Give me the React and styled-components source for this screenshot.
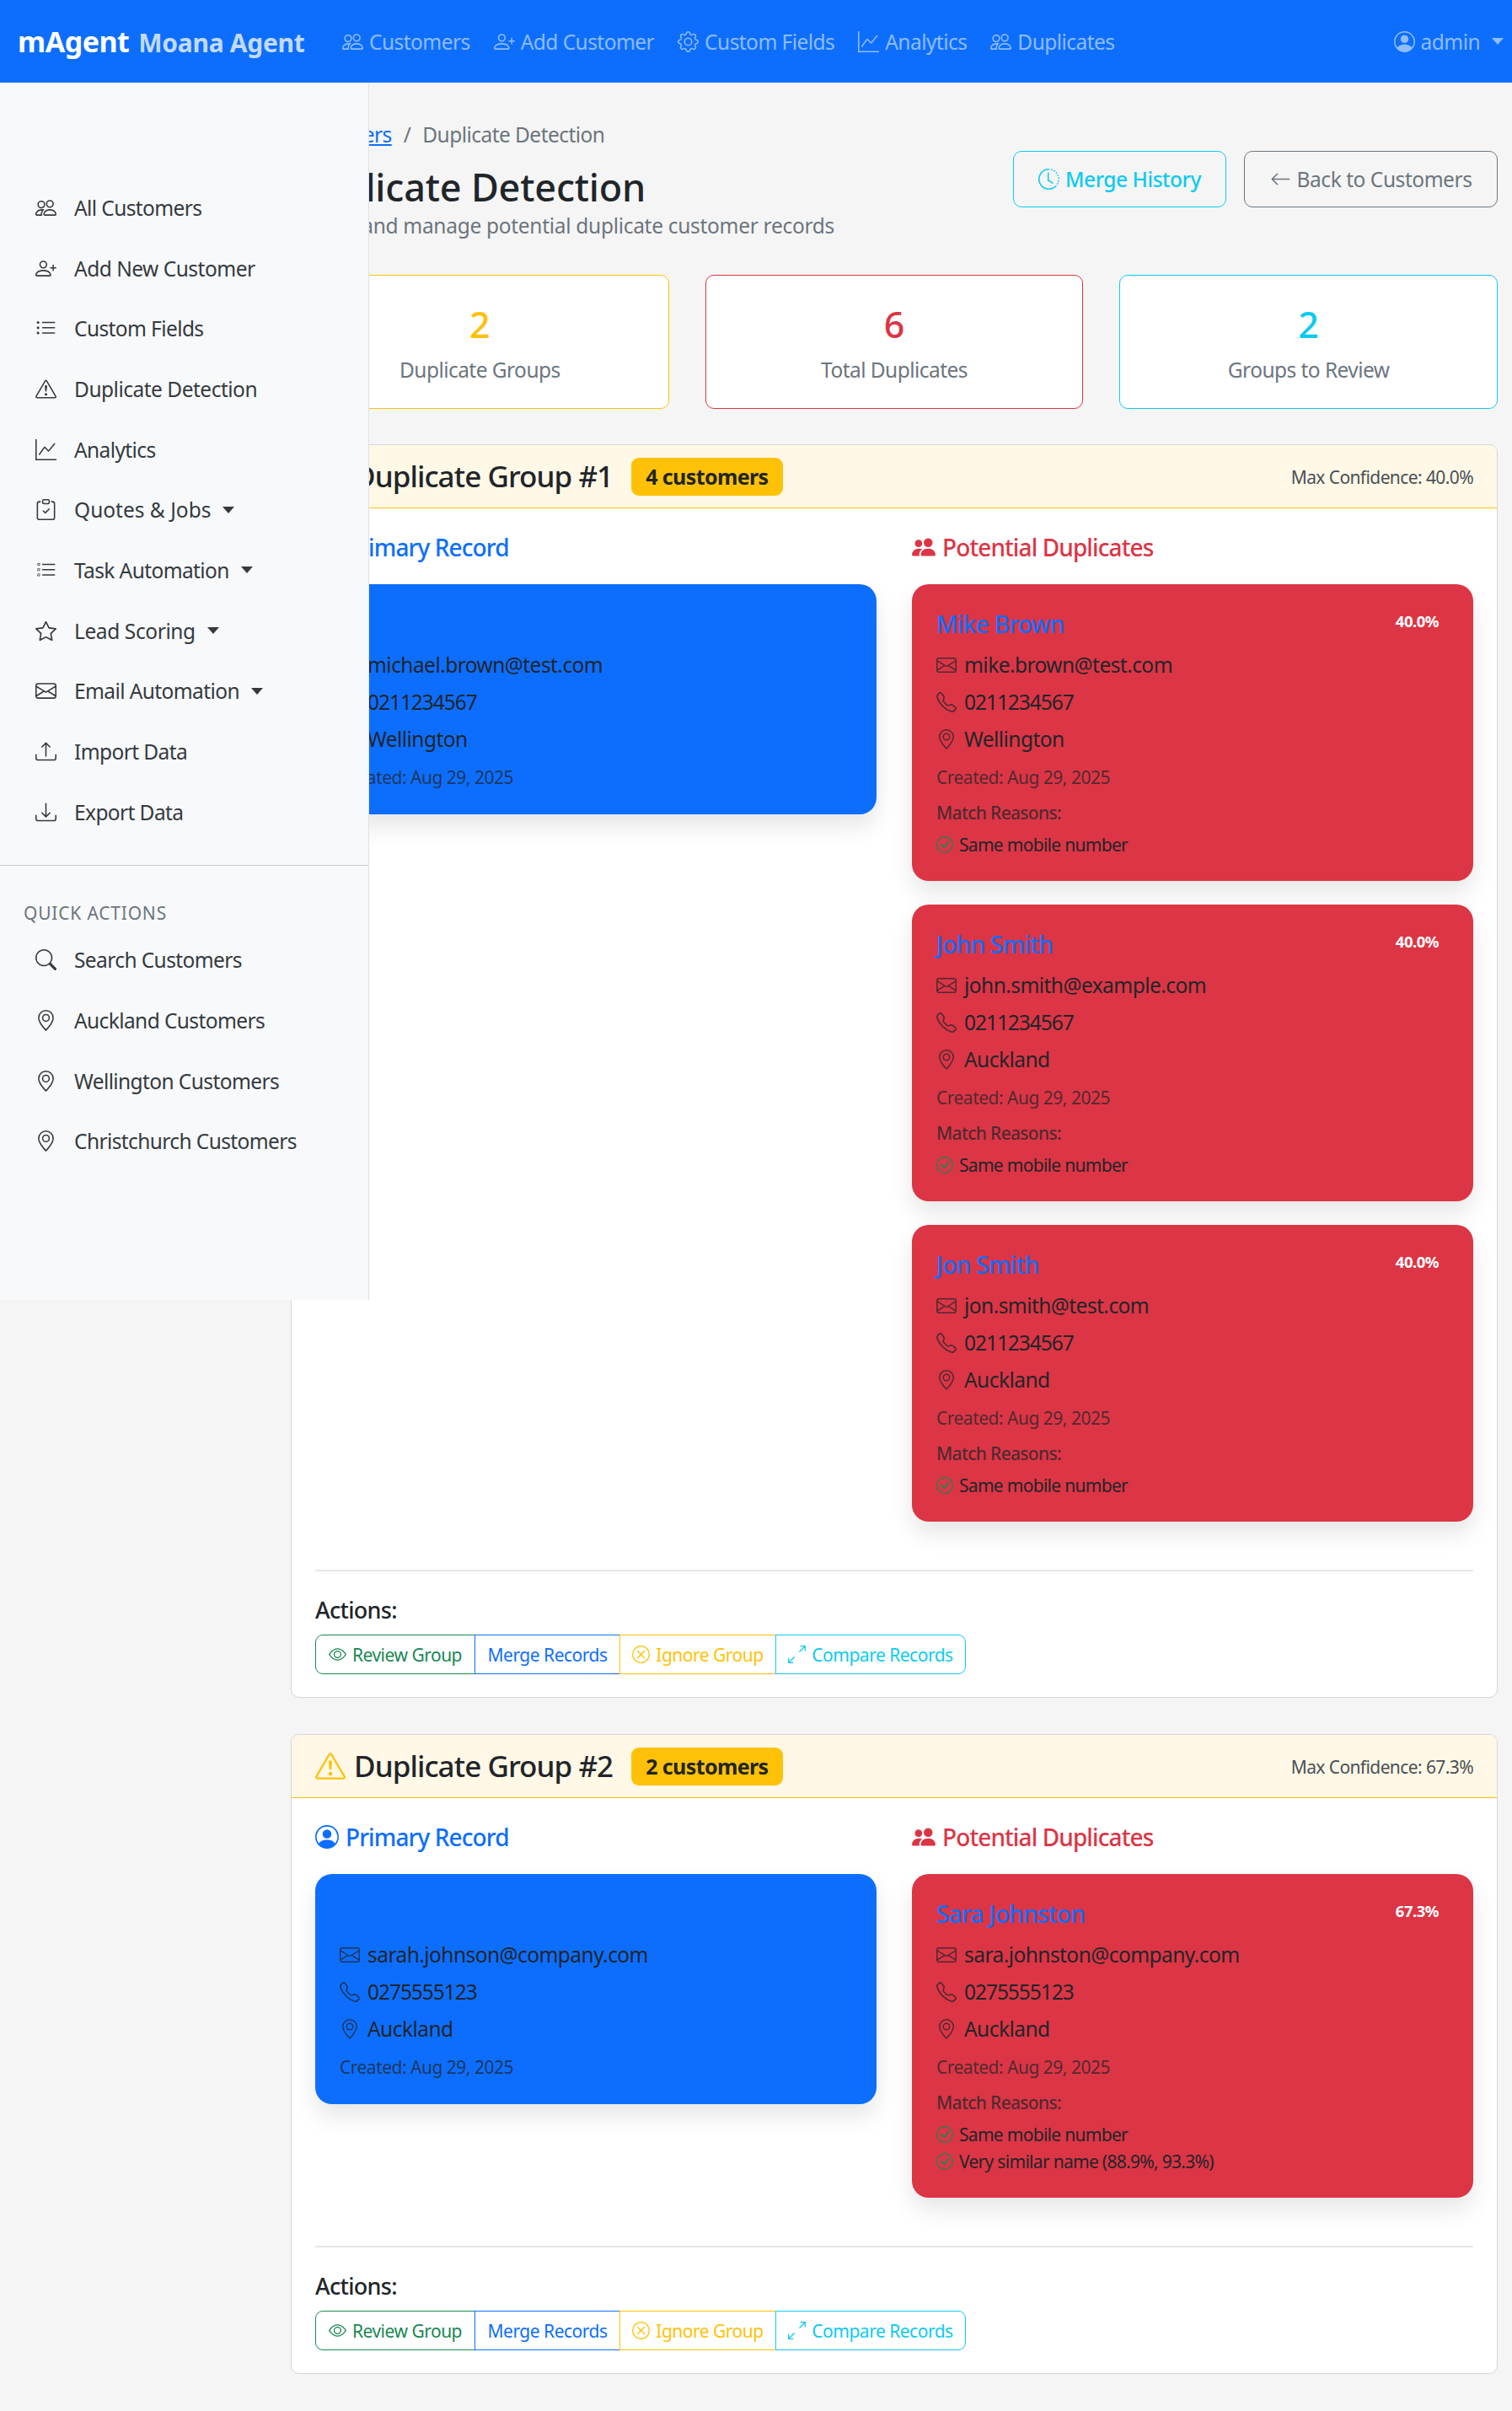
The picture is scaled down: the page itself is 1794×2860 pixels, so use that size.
import React from 'react'
import styled, { createGlobalStyle } from 'styled-components'
import {
  BsPeople,
  BsPeopleFill,
  BsPersonPlus,
  BsGear,
  BsGraphUp,
  BsPersonCircle,
  BsListUl,
  BsListTask,
  BsExclamationTriangle,
  BsClipboardCheck,
  BsStar,
  BsEnvelope,
  BsUpload,
  BsDownload,
  BsSearch,
  BsGeoAlt,
  BsClockHistory,
  BsArrowLeft,
  BsTelephone,
  BsCheckCircle,
  BsEye,
  BsXCircle,
  BsArrowsAngleExpand,
} from 'react-icons/bs'

const GlobalStyle = createGlobalStyle`
  html, body {
    margin: 0;
    padding: 0;
    background: #f5f5f5;
    color: #212529;
    font-family: "Noto Sans", "Open Sans", sans-serif;
  }
  * { box-sizing: border-box; }
`

const Page = styled.div`
  position: relative;
  width: 1794px;
  height: 2860px;
  overflow: hidden;
`

const Navbar = styled.nav`
  height: 98px;
  background: #0d6efd;
  display: flex;
  align-items: center;
  padding: 0 10px 0 21px;
`

const Brand = styled.div`
  display: flex;
  align-items: baseline;
  gap: 11px;
  width: 385px;
  font-weight: 700;
  font-size: 34px;
  letter-spacing: -0.5px;
  color: #fff;
`

const BrandSub = styled.span`
  font-size: 30px;
  letter-spacing: -0.3px;
  color: rgba(255, 255, 255, 0.75);
`

const NavLinks = styled.div`
  display: flex;
  align-items: center;
  gap: 28px;
  flex: 1;
`

const NavLink = styled.a`
  display: flex;
  align-items: center;
  gap: 7px;
  font-size: 24.5px;
  letter-spacing: -0.55px;
  color: rgba(255, 255, 255, 0.55);
  svg { font-size: 25px; }
`

const Caret = styled.span`
  display: inline-block;
  width: 0;
  height: 0;
  margin-left: ${p => p.$gap || 14}px;
  border-top: 8px solid currentColor;
  border-left: 7px solid transparent;
  border-right: 7px solid transparent;
`

const Sidebar = styled.aside`
  position: absolute;
  left: 0;
  top: 98px;
  z-index: 10;
  width: 438px;
  height: 1444px;
  padding-top: 112.5px;
  background: #f8f9fa;
  border-right: 1px solid #dee2e6;
`

const SideLink = styled.a`
  display: flex;
  align-items: center;
  height: 71.7px;
  padding-left: 42px;
  font-size: 24.5px;
  letter-spacing: ${p => p.$tracking ?? -0.6}px;
  color: #343a40;
  svg { font-size: 25px; margin-right: 21px; flex: none; }
`

const SideDivider = styled.hr`
  margin: 27px 0 41px;
  border: 0;
  border-top: 1px solid #c9cccf;
`

const SideHeading = styled.h6`
  margin: 0 0 5px;
  padding-left: 28px;
  font-size: 21px;
  line-height: 30px;
  font-weight: 400;
  letter-spacing: 0.8px;
  text-transform: uppercase;
  color: #6c757d;
`

const Main = styled.main`
  padding: 43px 17px 0 345px;
`

const PageHead = styled.header`
  display: flex;
  justify-content: space-between;
  align-items: center;
`

const Crumbs = styled.div`
  display: flex;
  gap: 14px;
  font-size: 24.5px;
  line-height: 37px;
  letter-spacing: -0.55px;
  color: #6c757d;
`

const CrumbLink = styled.a`
  color: #0d6efd;
  text-decoration: underline;
`

const Title = styled.h1`
  margin: 17px 0 0;
  font-size: 45px;
  line-height: 54px;
  font-weight: 500;
  letter-spacing: -0.2px;
`

const Subtitle = styled.p`
  margin: 0;
  font-size: 24.5px;
  line-height: 37px;
  letter-spacing: -0.3px;
  color: #6c757d;
`

const HeadActions = styled.div`
  display: flex;
  gap: 21px;
  padding-bottom: 2px;
`

const HeadButton = styled.a`
  display: flex;
  align-items: center;
  justify-content: center;
  gap: 7px;
  height: 67px;
  width: ${p => p.$width}px;
  border: 1.5px solid ${p => p.$color};
  border-radius: 10px;
  font-size: 24.5px;
  letter-spacing: -0.45px;
  font-weight: ${p => p.$weight || 400};
  color: ${p => p.$color};
  svg { font-size: 25px; }
`

const Stats = styled.section`
  display: grid;
  grid-template-columns: repeat(3, 1fr);
  gap: 43px;
  margin-top: 40px;
`

const StatCard = styled.div`
  height: 159px;
  padding-top: 33px;
  background: #fff;
  border: 1.5px solid ${p => p.$color};
  border-radius: 10px;
  text-align: center;
`

const StatValue = styled.div`
  font-size: 43px;
  line-height: 50px;
  font-weight: 500;
  color: ${p => p.$color};
`

const StatLabel = styled.div`
  margin-top: 10px;
  font-size: 24.5px;
  line-height: 37px;
  letter-spacing: -0.55px;
  color: #6c757d;
`

const Groups = styled.section`
  display: flex;
  flex-direction: column;
  gap: 43px;
  margin-top: 42px;
`

const GroupCard = styled.article`
  background: #fff;
  border: 1px solid #d5d5d5;
  border-radius: 10px;
  overflow: hidden;
`

const GroupHead = styled.header`
  display: flex;
  align-items: center;
  height: 75px;
  padding: 0 28px;
  background: #fff8e6;
  border-bottom: 1.5px solid #ffc107;
`

const GroupTitle = styled.h2`
  display: flex;
  align-items: center;
  gap: 10px;
  margin: 0;
  font-size: 35px;
  line-height: 42px;
  font-weight: 500;
  letter-spacing: -0.95px;
  svg { font-size: 36px; color: #ffc107; }
`

const CountBadge = styled.span`
  display: flex;
  align-items: center;
  height: 45px;
  margin-left: 22px;
  padding: 0 17px;
  border-radius: 9px;
  background: #ffc107;
  font-size: 25px;
  font-weight: 700;
  letter-spacing: -0.6px;
`

const MaxConfidence = styled.span`
  margin-left: auto;
  padding-top: 2px;
  font-size: 21px;
  letter-spacing: -0.6px;
  color: #495057;
`

const GroupBody = styled.div`
  padding: 27px 28px 27px;
`

const Columns = styled.div`
  display: grid;
  grid-template-columns: 666px 666px;
  gap: 42px;
`

const SectionHead = styled.h3`
  display: flex;
  align-items: center;
  gap: 8px;
  margin: 0 0 25px;
  font-size: 28px;
  line-height: 38px;
  font-weight: 500;
  letter-spacing: -0.9px;
  color: ${p => p.$color};
  svg { font-size: 28px; }
`

const Stack = styled.div`
  display: flex;
  flex-direction: column;
  gap: 28px;
`

const Record = styled.div`
  position: relative;
  padding: 29px 29px 27px;
  border-radius: 20px;
  background: ${p => p.$bg};
  box-shadow: 0 14px 28px rgba(0, 0, 0, 0.1);
`

const RecordName = styled.div`
  margin-bottom: 12px;
  font-size: 28px;
  line-height: 36px;
  font-weight: 500;
  letter-spacing: -0.7px;
  color: #0d6efd;
`

const Percent = styled.span`
  position: absolute;
  top: 32px;
  right: 41px;
  font-size: 18.5px;
  line-height: 24px;
  font-weight: 700;
  letter-spacing: -0.5px;
  color: #fff;
`

const InfoRow = styled.div`
  display: flex;
  align-items: center;
  gap: 9px;
  margin-bottom: 7px;
  font-size: 24.5px;
  line-height: 37px;
  letter-spacing: ${p => p.$tracking ?? -0.55}px;
  svg { font-size: 24px; flex: none; color: rgba(33, 37, 41, 0.75); }
`

const Created = styled.div`
  margin: 11px 0 ${p => (p.$last ? 1 : 0)}px;
  font-size: 21px;
  line-height: 32px;
  letter-spacing: -0.5px;
  color: rgba(33, 37, 41, 0.75);
`

const MatchLabel = styled.div`
  margin: 10px 0 6px;
  font-size: 21px;
  line-height: 32px;
  font-weight: 500;
  letter-spacing: -0.7px;
  color: rgba(33, 37, 41, 0.75);
`

const Reason = styled.div`
  display: flex;
  align-items: center;
  gap: 7px;
  font-size: 21px;
  line-height: 32px;
  letter-spacing: -0.7px;
  svg { font-size: 20px; flex: none; color: #198754; }
`

const ActionsArea = styled.div`
  margin-top: 57px;
  padding-top: 27px;
  border-top: 2px solid #e4e6e8;
`

const ActionsLabel = styled.div`
  margin-bottom: 10px;
  font-size: 27px;
  line-height: 38px;
  font-weight: 500;
  letter-spacing: -0.7px;
`

const ButtonGroup = styled.div`
  display: flex;
`

const GroupButton = styled.a`
  display: flex;
  align-items: center;
  justify-content: center;
  gap: 7px;
  width: ${p => p.$width}px;
  height: 47px;
  margin-left: ${p => (p.$first ? 0 : -1)}px;
  border: 1px solid ${p => p.$color};
  border-radius: ${p => (p.$first ? '9px 0 0 9px' : p.$last ? '0 9px 9px 0' : '0')};
  font-size: 21px;
  letter-spacing: -0.5px;
  color: ${p => p.$color};
  svg { font-size: 21px; flex: none; }
`

const BLUE = '#0d6efd'
const RED = '#dc3545'
const YELLOW = '#ffc107'
const CYAN = '#0dcaf0'
const GREEN = '#198754'
const GRAY = '#6c757d'

const navItems = [
  [BsPeople, 'Customers'],
  [BsPersonPlus, 'Add Customer'],
  [BsGear, 'Custom Fields'],
  [BsGraphUp, 'Analytics'],
  [BsPeople, 'Duplicates'],
]

const sideItems = [
  { icon: BsPeople, label: 'All Customers' },
  { icon: BsPersonPlus, label: 'Add New Customer', tracking: -0.5 },
  { icon: BsListUl, label: 'Custom Fields' },
  { icon: BsExclamationTriangle, label: 'Duplicate Detection', tracking: -0.5 },
  { icon: BsGraphUp, label: 'Analytics' },
  { icon: BsClipboardCheck, label: 'Quotes & Jobs', menu: true, tracking: 0 },
  { icon: BsListTask, label: 'Task Automation', menu: true },
  { icon: BsStar, label: 'Lead Scoring', menu: true, tracking: -0.4 },
  { icon: BsEnvelope, label: 'Email Automation', menu: true },
  { icon: BsUpload, label: 'Import Data' },
  { icon: BsDownload, label: 'Export Data' },
]

const quickItems = [
  [BsSearch, 'Search Customers'],
  [BsGeoAlt, 'Auckland Customers'],
  [BsGeoAlt, 'Wellington Customers'],
  [BsGeoAlt, 'Christchurch Customers'],
]

const groupActions = [
  { icon: BsEye, label: 'Review Group', color: GREEN, width: 190 },
  { label: 'Merge Records', color: BLUE, width: 173 },
  { icon: BsXCircle, label: 'Ignore Group', color: YELLOW, width: 186 },
  { icon: BsArrowsAngleExpand, label: 'Compare Records', color: CYAN, width: 226 },
]

const groups = [
  {
    id: 1,
    count: 4,
    confidence: '40.0%',
    primary: { name: 'Michael Brown', email: 'michael.brown@test.com', phone: '0211234567', city: 'Wellington' },
    duplicates: [
      { name: 'Mike Brown', email: 'mike.brown@test.com', phone: '0211234567', city: 'Wellington', score: '40.0%', reasons: ['Same mobile number'] },
      { name: 'John Smith', email: 'john.smith@example.com', phone: '0211234567', city: 'Auckland', score: '40.0%', reasons: ['Same mobile number'] },
      { name: 'Jon Smith', email: 'jon.smith@test.com', phone: '0211234567', city: 'Auckland', score: '40.0%', reasons: ['Same mobile number'] },
    ],
  },
  {
    id: 2,
    count: 2,
    confidence: '67.3%',
    primary: { name: 'Sarah Johnson', email: 'sarah.johnson@company.com', phone: '0275555123', city: 'Auckland' },
    duplicates: [
      { name: 'Sara Johnston', email: 'sara.johnston@company.com', phone: '0275555123', city: 'Auckland', score: '67.3%', reasons: ['Same mobile number', 'Very similar name (88.9%, 93.3%)'] },
    ],
  },
]

const RecordCard = ({ person, bg }) => (
  <Record $bg={bg}>
    <RecordName>{person.name}</RecordName>
    {person.score && <Percent>{person.score}</Percent>}
    <InfoRow><BsEnvelope />{person.email}</InfoRow>
    <InfoRow $tracking={-1.05}><BsTelephone />{person.phone}</InfoRow>
    <InfoRow><BsGeoAlt />{person.city}</InfoRow>
    <Created $last={!person.reasons}>Created: Aug 29, 2025</Created>
    {person.reasons && (
      <>
        <MatchLabel>Match Reasons:</MatchLabel>
        {person.reasons.map(r => (
          <Reason key={r}><BsCheckCircle />{r}</Reason>
        ))}
      </>
    )}
  </Record>
)

const DuplicateGroup = ({ group }) => (
  <GroupCard>
    <GroupHead>
      <GroupTitle><BsExclamationTriangle />Duplicate Group #{group.id}</GroupTitle>
      <CountBadge>{group.count} customers</CountBadge>
      <MaxConfidence>Max Confidence: {group.confidence}</MaxConfidence>
    </GroupHead>
    <GroupBody>
      <Columns>
        <div>
          <SectionHead $color={BLUE}><BsPersonCircle />Primary Record</SectionHead>
          <RecordCard person={group.primary} bg={BLUE} />
        </div>
        <div>
          <SectionHead $color={RED}><BsPeopleFill />Potential Duplicates</SectionHead>
          <Stack>
            {group.duplicates.map(d => (
              <RecordCard key={d.email} person={d} bg={RED} />
            ))}
          </Stack>
        </div>
      </Columns>
      <ActionsArea>
        <ActionsLabel>Actions:</ActionsLabel>
        <ButtonGroup>
          {groupActions.map(({ icon: Icon, label, color, width }, i) => (
            <GroupButton
              key={label}
              $color={color}
              $width={width}
              $first={i === 0}
              $last={i === groupActions.length - 1}
            >
              {Icon && <Icon />}
              {label}
            </GroupButton>
          ))}
        </ButtonGroup>
      </ActionsArea>
    </GroupBody>
  </GroupCard>
)

export default function App() {
  return (
    <Page>
      <GlobalStyle />
      <Navbar>
        <Brand>mAgent <BrandSub>Moana Agent</BrandSub></Brand>
        <NavLinks>
          {navItems.map(([Icon, label]) => (
            <NavLink key={label}><Icon />{label}</NavLink>
          ))}
        </NavLinks>
        <NavLink><BsPersonCircle />admin<Caret $gap={7} /></NavLink>
      </Navbar>

      <Sidebar>
        {sideItems.map(({ icon: Icon, label, menu, tracking }) => (
          <SideLink key={label} $tracking={tracking}><Icon />{label}{menu && <Caret />}</SideLink>
        ))}
        <SideDivider />
        <SideHeading>Quick Actions</SideHeading>
        {quickItems.map(([Icon, label]) => (
          <SideLink key={label}><Icon />{label}</SideLink>
        ))}
      </Sidebar>

      <Main>
        <PageHead>
          <div>
            <Crumbs>
              <CrumbLink>Customers</CrumbLink>
              <span>/</span>
              <span>Duplicate Detection</span>
            </Crumbs>
            <Title>Duplicate Detection</Title>
            <Subtitle>Review and manage potential duplicate customer records</Subtitle>
          </div>
          <HeadActions>
            <HeadButton $color={CYAN} $width={253} $weight={500}><BsClockHistory />Merge History</HeadButton>
            <HeadButton $color={GRAY} $width={301}><BsArrowLeft />Back to Customers</HeadButton>
          </HeadActions>
        </PageHead>

        <Stats>
          <StatCard $color={YELLOW}>
            <StatValue $color={YELLOW}>2</StatValue>
            <StatLabel>Duplicate Groups</StatLabel>
          </StatCard>
          <StatCard $color={RED}>
            <StatValue $color={RED}>6</StatValue>
            <StatLabel>Total Duplicates</StatLabel>
          </StatCard>
          <StatCard $color={CYAN}>
            <StatValue $color={CYAN}>2</StatValue>
            <StatLabel>Groups to Review</StatLabel>
          </StatCard>
        </Stats>

        <Groups>
          {groups.map(g => (
            <DuplicateGroup key={g.id} group={g} />
          ))}
        </Groups>
      </Main>
    </Page>
  )
}
